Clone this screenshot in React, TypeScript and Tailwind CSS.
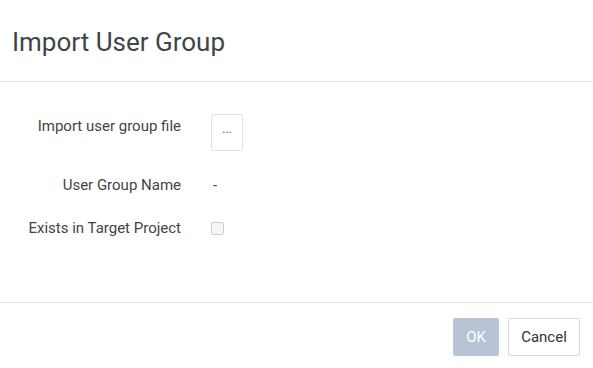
import React from 'react';

export default function App() {
  return (
    <div className="w-[593px] h-[368px] bg-white flex flex-col font-['Roboto',sans-serif] text-[#444]">
      {/* Header */}
      <div className="h-[82px] border-b border-[#e4e4e4] flex items-center px-3 shrink-0">
        <h1 className="text-[26px] text-[#3e4747] pt-[3px]">Import User Group</h1>
      </div>

      {/* Body */}
      <div className="flex-1 pt-[32px]">
        <div className="flex items-start">
          <div className="w-[181px] text-right text-[15px] pt-[1px]">Import user group file</div>
          <button className="ml-[30px] w-[32px] h-[37px] border border-[#e2e2e2] rounded-[2px] bg-white text-[12px] text-[#555] leading-none pb-[8px]">
            ...
          </button>
        </div>
        <div className="flex items-center mt-[24px] h-[20px]">
          <div className="w-[181px] text-right text-[15px]">User Group Name</div>
          <div className="ml-[32px] text-[15px]">-</div>
        </div>
        <div className="flex items-center mt-[23px] h-[20px]">
          <div className="w-[181px] text-right text-[15px]">Exists in Target Project</div>
          <div className="ml-[30px] w-[13px] h-[13px] border border-[#cfcfcf] rounded-[2px] bg-[#f6f6f6]" />
        </div>
      </div>

      {/* Footer */}
      <div className="h-[66px] border-t border-[#e4e4e4] flex items-start justify-end gap-[9px] pt-[15px] pr-[13px] shrink-0">
        <button className="w-[46px] h-[38px] rounded-[2px] bg-[#b8c4d6] text-white text-[15px]">OK</button>
        <button className="w-[72px] h-[38px] rounded-[2px] border border-[#dcdcdc] bg-white text-[#333] text-[15px]">Cancel</button>
      </div>
    </div>
  );
}
